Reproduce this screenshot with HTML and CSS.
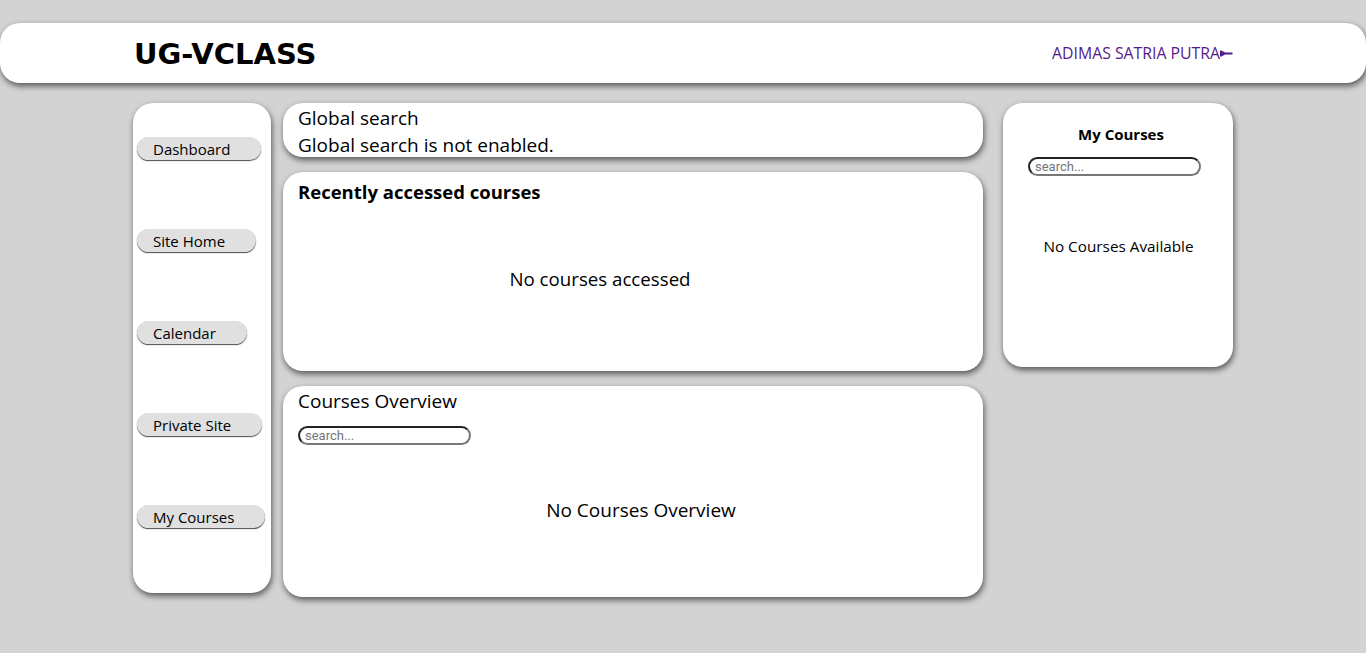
FILE: index.html
```html
<!DOCTYPE html>
<html>
<head>
<meta charset="utf-8">
<title>UG-VCLASS</title>
<link rel="stylesheet" href="styles.css">
</head>
<body>
<header class="topbar">
  <div class="topbar-inner">
    <div class="logo">UG-VCLASS</div>
    <a class="user" href="#">ADIMAS SATRIA PUTRA<svg class="logout" width="13" height="7" viewBox="0 0 13 7"><path d="M0 0.5 L1.5 0.5 L5 2.6 L12.5 2.6 L12.5 4.4 L5 4.4 L1.5 6.5 L0 6.5 Z" fill="#551a8b"/></svg></a>
  </div>
</header>
<main class="layout">
  <nav class="sidebar">
    <a class="nav-btn" href="#">Dashboard</a>
    <a class="nav-btn" href="#">Site Home</a>
    <a class="nav-btn" href="#">Calendar</a>
    <a class="nav-btn" href="#">Private Site</a>
    <a class="nav-btn" href="#">My Courses</a>
  </nav>
  <section class="center">
    <div class="card card-search">
      <div class="line">Global search</div>
      <div class="line">Global search is not enabled.</div>
    </div>
    <div class="card card-recent">
      <h2 class="card-title">Recently accessed courses</h2>
      <p class="empty empty-recent">No courses accessed</p>
    </div>
    <div class="card card-overview">
      <div class="line">Courses Overview</div>
      <input class="search" type="text" placeholder="search...">
      <p class="empty empty-overview">No Courses Overview</p>
    </div>
  </section>
  <aside class="card side-courses">
    <h3 class="side-title">My Courses</h3>
    <input class="search side-search" type="text" placeholder="search...">
    <p class="side-empty">No Courses Available</p>
  </aside>
</main>
</body>
</html>
```

FILE: styles.css
```css
html, body {
  margin: 0;
  padding: 0;
}
body {
  background: #d3d3d3;
  font-family: "Open Sans", "Noto Sans", sans-serif;
  color: #000;
  height: 653px;
}
.topbar {
  margin-top: 23px;
  height: 60px;
  background: #fff;
  border-radius: 20px;
  box-shadow: 1px 3px 6px rgba(0, 0, 0, 0.6);
}
.topbar-inner {
  width: 1100px;
  height: 60px;
  margin: 0 auto;
  display: flex;
  align-items: center;
  justify-content: space-between;
}
.logo {
  font-family: "DejaVu Sans", sans-serif;
  font-weight: bold;
  font-size: 29px;
  padding-left: 1px;
  margin-top: 1px;
}
.user {
  color: #551a8b;
  text-decoration: none;
  font-size: 15.8px;
  display: flex;
  align-items: center;
  margin-top: 0;
}
.logout {
  display: block;
  margin-top: 1px;
}
.layout {
  width: 1100px;
  margin: 20px auto 0;
  display: flex;
  align-items: flex-start;
}
.card {
  background: #fff;
  border-radius: 20px;
  box-shadow: 1px 3px 6px rgba(0, 0, 0, 0.6);
  box-sizing: border-box;
}
.sidebar {
  width: 138px;
  height: 490px;
  background: #fff;
  border-radius: 20px;
  box-shadow: 1px 3px 6px rgba(0, 0, 0, 0.6);
  box-sizing: border-box;
  padding: 34px 0 0 4px;
  display: flex;
  flex-direction: column;
  align-items: flex-start;
  gap: 69px;
}
.nav-btn {
  display: block;
  height: 23px;
  line-height: 24px;
  box-sizing: border-box;
  padding: 0 31px 0 16px;
  background: #e0e0e0;
  border-radius: 12px;
  box-shadow: 0 1px 1px rgba(0, 0, 0, 0.7);
  color: #000;
  text-decoration: none;
  font-size: 15px;
}
.center {
  width: 700px;
  margin-left: 12px;
  display: flex;
  flex-direction: column;
  gap: 15px;
}
.card-search {
  height: 54px;
  padding: 2px 15px 0;
}
.line {
  font-size: 19px;
  line-height: 27px;
}
.card-recent {
  height: 199px;
  padding: 5px 15px 0;
}
.card-title {
  margin: 0;
  font-size: 18.5px;
  font-weight: bold;
  line-height: 30px;
}
.empty {
  margin: 0;
  font-size: 19px;
  text-align: center;
}
.empty-recent {
  font-size: 18.7px;
  padding: 59px 66px 0 0;
}
.card-overview {
  height: 211px;
  padding: 0 15px;
}
.card-overview .line {
  padding-top: 2px;
}
.search {
  display: block;
  width: 173px;
  height: 19px;
  box-sizing: border-box;
  margin-top: 11px;
  padding: 0 5px;
  border: 2px solid #222;
  border-right-color: #777;
  border-bottom-color: #777;
  border-radius: 10px;
  font-family: "Roboto", "Liberation Sans", sans-serif;
  font-size: 13px;
  background: #fff;
  outline: none;
}
.search::placeholder {
  color: #757575;
}
.empty-overview {
  padding: 52px 0 0 16px;
}
.side-courses {
  width: 230px;
  height: 264px;
  margin-left: 20px;
  padding: 20px 0 0 25px;
}
.side-title {
  margin: 0;
  font-size: 15px;
  font-weight: bold;
  text-align: center;
  line-height: 22px;
  width: 186px;
}
.side-search {
  margin-top: 12px;
}
.side-empty {
  margin: 0;
  padding-top: 60px;
  font-size: 15.3px;
  text-align: center;
  width: 181px;
}
```
